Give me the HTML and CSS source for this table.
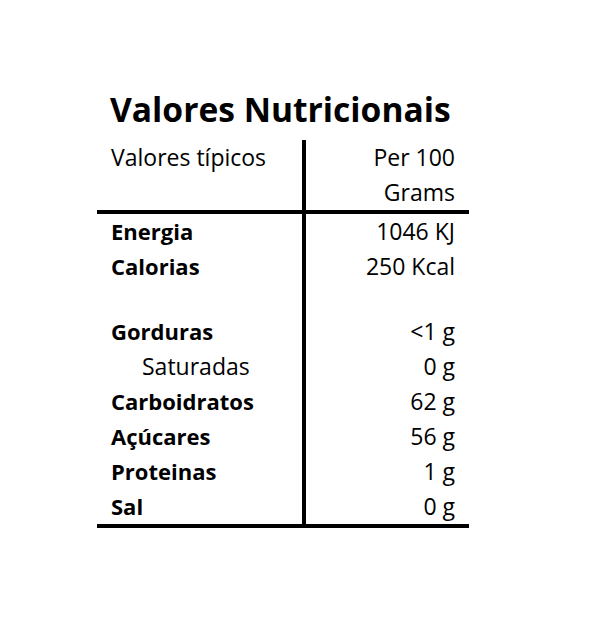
FILE: index.html
```html
<!DOCTYPE html>
<html lang="pt-BR">
<head>
  <meta charset="UTF-8">
  <meta name="viewport" content="width=device-width, initial-scale=1.0">
  <title>Valores Nutricionais</title>
  <link rel="stylesheet" href="styles.css">
</head>
<body>
  <div class="label">
    <h1>Valores Nutricionais</h1>

    <div class="facts">
      <div class="name head">Valores típicos</div>
      <div class="value head">Per 100<br>Grams</div>

      <div class="name bold">Energia</div>
      <div class="value">1046 KJ</div>
      <div class="name bold">Calorias</div>
      <div class="value">250 Kcal</div>

      <div class="name spacer"></div>
      <div class="value spacer"></div>

      <div class="name bold">Gorduras</div>
      <div class="value">&lt;1 g</div>
      <div class="name sub">Saturadas</div>
      <div class="value">0 g</div>
      <div class="name bold">Carboidratos</div>
      <div class="value">62 g</div>
      <div class="name bold">Açúcares</div>
      <div class="value">56 g</div>
      <div class="name bold">Proteinas</div>
      <div class="value">1 g</div>
      <div class="name bold">Sal</div>
      <div class="value">0 g</div>
    </div>
  </div>
</body>
</html>
```

FILE: styles.css
```css
body {
  margin: 0;
  font-family: 'Open Sans', 'Lato', sans-serif;
  color: #000;
  background-color: #fff;
}
.label {
  padding: 89px 0 0 97px;
  width: 372px;
}
h1 {
  margin: 0 0 11px 13px;
  font-size: 33.6px;
  line-height: 40px;
  font-weight: 700;
}
.facts {
  display: grid;
  grid-template-columns: 209px 163px;
  border-bottom: 4px solid #000;
  font-size: 23px;
  line-height: 35px;
}
.name {
  padding-left: 14px;
  border-right: 4px solid #000;
}
.value {
  padding-right: 14px;
  text-align: right;
}
.head {
  border-bottom: 4px solid #000;
}
.bold {
  font-size: 22px;
  font-weight: 700;
}
.sub {
  padding-left: 45px;
}
.spacer {
  height: 30px;
}
```
